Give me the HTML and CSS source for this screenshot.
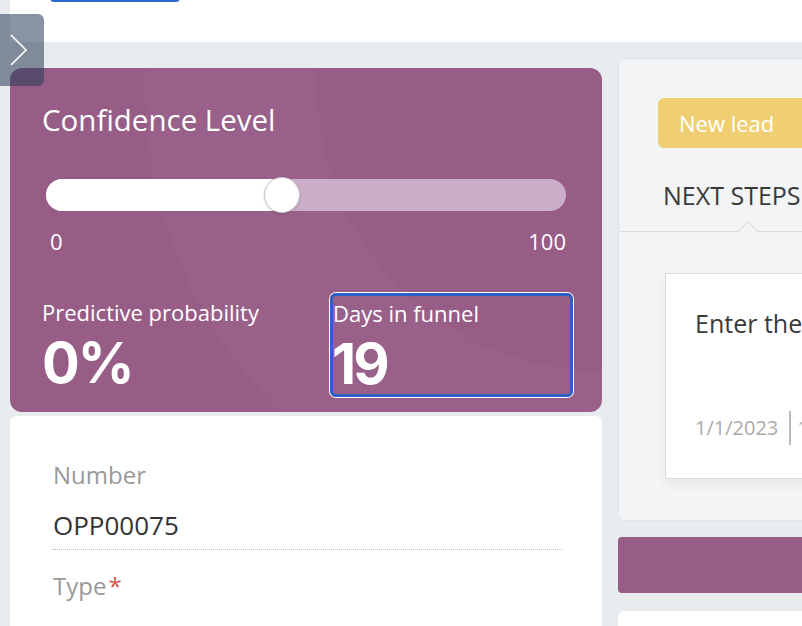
FILE: index.html
```html
<!DOCTYPE html>
<html lang="en">
<head>
<meta charset="utf-8">
<title>Opportunity</title>
<link rel="stylesheet" href="styles.css">
</head>
<body>
<header class="topbar">
  <span class="top-btn"></span>
</header>
<button class="side-toggle" aria-label="Expand">
  <svg width="20" height="34" viewBox="0 0 20 34"><path d="M2 2 L17 17 L2 32" fill="none" stroke="#fff" stroke-width="1.6"/></svg>
</button>
<main class="layout">
  <section class="left-col">
    <div class="confidence-card">
      <div class="decor"></div>
      <h2 class="card-title">Confidence Level</h2>
      <div class="slider">
        <div class="slider-fill" style="width:45.4%"></div>
        <div class="slider-thumb" style="left:45.4%"></div>
      </div>
      <div class="slider-scale"><span>0</span><span>100</span></div>
      <div class="stats">
        <div class="stat">
          <div class="stat-label">Predictive probability</div>
          <div class="stat-value">0%</div>
        </div>
        <div class="stat stat-focused">
          <div class="stat-label">Days in funnel</div>
          <div class="stat-value">19</div>
        </div>
      </div>
    </div>
    <div class="form-card">
      <div class="field">
        <div class="field-label">Number</div>
        <div class="field-value">OPP00075</div>
      </div>
      <div class="field">
        <div class="field-label">Type<span class="req">*</span></div>
      </div>
    </div>
  </section>
  <section class="right-col">
    <div class="steps-panel">
      <div class="stage-row"><span class="stage">New lead</span></div>
      <div class="tabs"><span class="tab">NEXT STEPS</span><span class="caret"></span></div>
      <div class="step-card">
        <div class="step-text">Enter the</div>
        <div class="step-meta"><span class="date">1/1/2023</span><span class="sep"></span><span class="more">1</span></div>
      </div>
    </div>
    <div class="purple-bar"></div>
    <div class="white-card"></div>
  </section>
</main>
</body>
</html>
```
FILE: styles.css
```css
* { box-sizing: border-box; }
html, body { margin: 0; padding: 0; }
body {
  width: 802px;
  height: 626px;
  overflow: hidden;
  background: #e9ecee;
  font-family: "Open Sans", "Noto Sans", sans-serif;
  position: relative;
}
.topbar {
  height: 42px;
  margin-left: 10px;
  background: #fff;
  position: relative;
}
.top-btn {
  position: absolute;
  left: 40px;
  top: -10px;
  width: 130px;
  height: 12px;
  background: #2a67d1;
  border-radius: 4px;
}
.side-toggle {
  position: absolute;
  left: 0;
  top: 14px;
  width: 44px;
  height: 72px;
  border: 0;
  padding: 0 0 0 9px;
  background: rgba(40, 60, 85, 0.55);
  border-radius: 0 6px 6px 0;
  display: flex;
  align-items: center;
  z-index: 5;
}
.layout {
  display: grid;
  grid-template-columns: 592px 1fr;
  column-gap: 16px;
  padding-left: 10px;
  align-items: start;
}
.left-col { padding-top: 26px; display: flex; flex-direction: column; gap: 4px; }
.confidence-card {
  position: relative;
  overflow: hidden;
  background: #975d87;
  border-radius: 12px;
  padding: 34px 28px 12px 32px;
  color: #fff;
  height: 344px;
}
.decor {
  position: absolute;
  inset: 0;
  background:
    radial-gradient(circle at 590px 20px, transparent 282px, rgba(255,255,255,0.025) 284px, rgba(255,255,255,0.025) 453px, transparent 456px);
  pointer-events: none;
}
.card-title {
  position: relative;
  margin: 0;
  font-weight: 400;
  font-size: 29.5px;
  line-height: 36px;
}
.slider {
  position: relative;
  margin: 41px 8px 0 4px;
  height: 32px;
  border-radius: 16px;
  background: #cdaec8;
}
.slider-fill {
  height: 100%;
  background: #fff;
  border-radius: 16px 0 0 16px;
}
.slider-thumb {
  position: absolute;
  top: -2px;
  width: 36px;
  height: 36px;
  margin-left: -18px;
  border-radius: 50%;
  background: #fff;
  border: 1px solid #c9c3c8;
  box-shadow: 0 1px 3px rgba(0,0,0,0.15);
}
.slider-scale {
  position: relative;
  display: flex;
  justify-content: space-between;
  margin: 16px 8px 0 8px;
  font-size: 22px;
  line-height: 28px;
}
.stats {
  position: relative;
  display: grid;
  grid-template-columns: 1fr 245px;
  margin-top: 37px;
}
.stat { padding: 4px 0 5px; }
.stat-label { font-size: 22px; line-height: 32px; white-space: nowrap; }
.stat-value {
  font-family: "Inter", "Open Sans", sans-serif;
  font-weight: 700;
  font-size: 56px;
  line-height: 56px;
  margin-top: 7px;
  letter-spacing: -2px;
}
.stat-focused {
  padding: 1px 0 2px 1px;
  border: 3px solid #2c62c5;
  border-radius: 6px;
  box-shadow: 0 0 0 1px #fff;
  margin: 1px;
}
.stat-focused .stat-label { margin-left: -1px; }
.stat-focused .stat-value { letter-spacing: -3px; margin-left: -2px; }
.form-card {
  background: #fff;
  border-radius: 6px;
  padding: 44px 40px 0 43px;
  height: 230px;
}
.field-label { font-size: 24px; line-height: 30px; color: #999; }
.field-value {
  margin-top: 20px;
  margin-left: -1px;
  padding: 0 0 9px 1px;
  font-size: 26px;
  line-height: 30px;
  color: #333;
  border-bottom: 1px dotted #b8b8b8;
}
.field + .field { margin-top: 21px; }
.req { color: #d9534f; margin-left: 2px; }
.right-col { padding-top: 16px; display: flex; flex-direction: column; }
.steps-panel {
  background: #f3f4f6;
  border: 1px solid #e2e4e7;
  border-right: 0;
  border-radius: 6px 0 0 6px;
  padding: 39px 0 41px 0;
}
.stage-row { padding-left: 39px; }
.stage {
  display: block;
  height: 50px;
  background: #f0cf72;
  color: #fff;
  font-size: 22px;
  line-height: 50px;
  padding-left: 21px;
  border-radius: 6px 0 0 6px;
  white-space: nowrap;
}
.tabs {
  position: relative;
  margin-top: 32px;
  padding: 0 0 21px 44px;
  border-bottom: 1px solid #dadde0;
  white-space: nowrap;
  overflow: visible;
}
.tab { font-size: 25px; line-height: 30px; color: #3a3a3a; }
.caret {
  position: absolute;
  left: 122px;
  bottom: -7px;
  width: 14px;
  height: 14px;
  background: #f3f4f6;
  border-left: 1px solid #dadde0;
  border-top: 1px solid #dadde0;
  transform: rotate(45deg);
}
.step-card {
  margin: 41px 0 0 46px;
  height: 206px;
  background: #fff;
  border: 1px solid #dcdcdc;
  border-right: 0;
  box-shadow: 0 6px 10px rgba(0,0,0,0.05);
  padding: 34px 0 0 29px;
  overflow: hidden;
}
.step-text { font-size: 25px; line-height: 30px; color: #3a3a3a; white-space: nowrap; }
.step-meta {
  display: flex;
  align-items: center;
  margin-top: 73px;
  font-size: 20px;
  line-height: 26px;
  color: #aaa;
  white-space: nowrap;
}
.sep { width: 2px; height: 34px; background: #bbb; margin: 0 6px 0 11px; }
.more { color: #aaa; }
.purple-bar {
  margin-top: 16px;
  height: 56px;
  background: #975d87;
  border-radius: 4px 0 0 4px;
}
.white-card {
  margin-top: 18px;
  height: 60px;
  background: #fff;
  border-radius: 6px 0 0 0;
}
```
